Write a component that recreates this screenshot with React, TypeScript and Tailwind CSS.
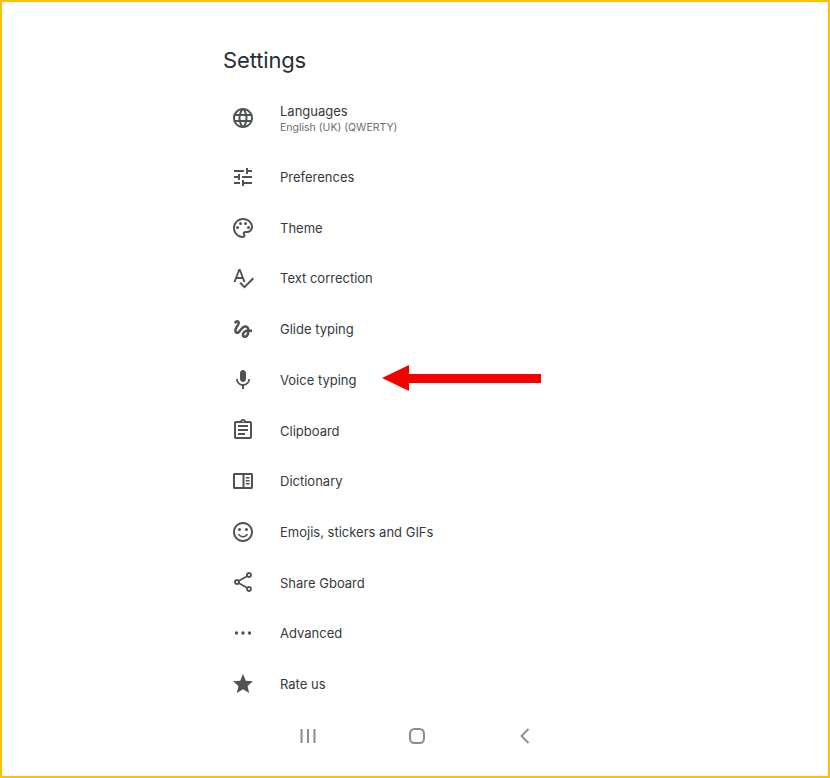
import React from 'react';

type IconProps = { className?: string };

const Svg: React.FC<{ children: React.ReactNode; className?: string }> = ({ children, className }) => (
    <svg viewBox="0 0 24 24" className={className ?? 'w-6 h-6 fill-[#505356]'}>
        {children}
    </svg>
);

const Globe = () => <Svg><path d="M11.99 2C6.47 2 2 6.48 2 12s4.47 10 9.99 10C17.52 22 22 17.52 22 12S17.52 2 11.99 2zm6.93 6h-2.95c-.32-1.25-.78-2.45-1.38-3.56 1.84.63 3.37 1.91 4.33 3.56zM12 4.04c.83 1.2 1.48 2.53 1.91 3.96h-3.82c.43-1.43 1.08-2.76 1.91-3.96zM4.26 14C4.1 13.36 4 12.69 4 12s.1-1.36.26-2h3.38c-.08.66-.14 1.32-.14 2 0 .68.06 1.34.14 2H4.26zm.82 2h2.95c.32 1.25.78 2.45 1.38 3.56-1.84-.63-3.37-1.9-4.33-3.56zm2.95-8H5.08c.96-1.66 2.49-2.93 4.33-3.56C8.81 5.55 8.35 6.75 8.03 8zM12 19.96c-.83-1.2-1.48-2.53-1.91-3.96h3.82c-.43 1.43-1.08 2.76-1.91 3.96zM14.34 14H9.66c-.09-.66-.16-1.32-.16-2 0-.68.07-1.35.16-2h4.68c.09.65.16 1.32.16 2 0 .68-.07 1.34-.16 2zm.25 5.56c.6-1.11 1.06-2.31 1.38-3.56h2.95c-.96 1.65-2.49 2.93-4.33 3.56zM16.36 14c.08-.66.14-1.32.14-2 0-.68-.06-1.34-.14-2h3.38c.16.64.26 1.31.26 2s-.1 1.36-.26 2h-3.38z" /></Svg>;
const Tune = () => <Svg><path d="M3 17v2h6v-2H3zM3 5v2h10V5H3zm10 16v-2h8v-2h-8v-2h-2v6h2zM7 9v2H3v2h4v2h2V9H7zm14 4v-2H11v2h10zm-6-4h2V7h4V5h-4V3h-2v6z" /></Svg>;
const Palette = () => (
    <Svg>
        <path d="M12 22C6.49 22 2 17.51 2 12S6.49 2 12 2s10 4.04 10 9c0 3.31-2.69 6-6 6h-1.77c-.28 0-.5.22-.5.5 0 .12.05.23.13.33.41.47.64 1.06.64 1.67 0 1.38-1.12 2.5-2.5 2.5zm0-18c-4.41 0-8 3.59-8 8s3.59 8 8 8c.28 0 .5-.22.5-.5 0-.16-.08-.28-.14-.35-.41-.46-.63-1.05-.63-1.65 0-1.38 1.12-2.5 2.5-2.5H16c2.21 0 4-1.79 4-4 0-3.86-3.59-7-8-7z" />
        <circle cx="6.5" cy="11.5" r="1.5" />
        <circle cx="9.5" cy="7.5" r="1.5" />
        <circle cx="14.5" cy="7.5" r="1.5" />
        <circle cx="17.5" cy="11.5" r="1.5" />
    </Svg>
);
const Spellcheck = () => <Svg><path d="M12.45 16h2.09L9.43 3H7.57L2.46 16h2.09l1.12-3h5.64l1.14 3zm-6.02-5L8.5 5.48 10.57 11H6.43zm15.16.59l-8.09 8.09L9.83 16l-1.41 1.41 5.09 5.09L23 13l-1.41-1.41z" /></Svg>;
const Gesture = () => <Svg><path d="M4.59 6.89c.7-.71 1.4-1.35 1.71-1.22.5.2 0 1.03-.3 1.52-.25.42-2.86 3.89-2.86 6.31 0 1.28.48 2.34 1.34 2.98.75.56 1.74.73 2.64.46 1.07-.31 1.95-1.4 3.06-2.77 1.21-1.49 2.83-3.44 4.08-3.44 1.63 0 1.65 1.01 1.76 1.79-3.78.64-5.38 3.67-5.38 5.37 0 1.7 1.44 3.09 3.21 3.09 1.63 0 4.29-1.33 4.69-6.1H21v-2.5h-2.47c-.15-1.65-1.09-4.2-4.03-4.2-2.25 0-4.18 1.91-4.94 2.84-.58.73-2.06 2.48-2.29 2.72-.25.3-.68.84-1.11.84-.45 0-.72-.83-.36-1.92.35-1.09 1.4-2.86 1.85-3.52.78-1.14 1.3-1.92 1.3-3.28C8.95 3.69 7.31 3 6.44 3 5.12 3 3.97 4 3.72 4.25c-.36.36-.66.66-.88.93l1.75 1.71zm9.29 11.66c-.31 0-.74-.26-.74-.72 0-.6.73-2.2 2.87-2.76-.3 2.69-1.43 3.48-2.13 3.48z" /></Svg>;
const Mic = () => <Svg><path d="M12 14c1.66 0 2.99-1.34 2.99-3L15 5c0-1.66-1.34-3-3-3S9 3.34 9 5v6c0 1.66 1.34 3 3 3zm5.3-3c0 3-2.54 5.1-5.3 5.1S6.7 14 6.7 11H5c0 3.41 2.72 6.23 6 6.72V21h2v-3.28c3.28-.48 6-3.3 6-6.72h-1.7z" /></Svg>;
const Clipboard = () => <Svg><path d="M7 15h7v2H7zm0-4h10v2H7zm0-4h10v2H7zm12-4h-4.18C14.4 1.84 13.3 1 12 1c-1.3 0-2.4.84-2.82 2H5c-.14 0-.27.01-.4.04-.39.08-.74.28-1.01.55-.18.18-.33.4-.43.64-.1.23-.16.49-.16.77v14c0 .27.06.54.16.78s.25.45.43.64c.27.27.62.47 1.01.55.13.02.26.03.4.03h14c1.1 0 2-.9 2-2V5c0-1.1-.9-2-2-2zm-7-.25c.41 0 .75.34.75.75s-.34.75-.75.75-.75-.34-.75-.75.34-.75.75-.75zM19 19H5V5h14v14z" /></Svg>;
const Dictionary = () => (
    <Svg>
        <path d="M3.5 4h17c.83 0 1.5.67 1.5 1.5v13c0 .83-.67 1.5-1.5 1.5h-17C2.67 20 2 19.33 2 18.5v-13C2 4.67 2.67 4 3.5 4zM4 6v12h7.5V6H4zm9.5 0v12H20V6h-6.5z" />
        <path d="M14.8 8h3.8v1.4h-3.8zm0 3h3.8v1.4h-3.8zm0 3h3.8v1.4h-3.8z" />
    </Svg>
);
const Smile = () => (
    <Svg>
        <path d="M11.99 2C6.47 2 2 6.48 2 12s4.47 10 9.99 10C17.52 22 22 17.52 22 12S17.52 2 11.99 2zM12 20c-4.42 0-8-3.58-8-8s3.58-8 8-8 8 3.58 8 8-3.58 8-8 8z" />
        <circle cx="15.5" cy="9.5" r="1.5" />
        <circle cx="8.5" cy="9.5" r="1.5" />
        <path d="M12 16c-1.48 0-2.75-.81-3.45-2H6.88c.8 2.05 2.79 3.5 5.12 3.5s4.32-1.45 5.12-3.5h-1.67c-.7 1.19-1.97 2-3.45 2z" />
    </Svg>
);
const Share = () => <Svg><path d="M18 16.08c-.76 0-1.44.3-1.96.77L8.91 12.7c.05-.23.09-.46.09-.7s-.04-.47-.09-.7l7.05-4.11c.54.5 1.25.81 2.04.81 1.66 0 3-1.34 3-3s-1.34-3-3-3-3 1.34-3 3c0 .24.04.47.09.7L8.04 9.81C7.5 9.31 6.79 9 6 9c-1.66 0-3 1.34-3 3s1.34 3 3 3c.79 0 1.5-.31 2.04-.81l7.12 4.16c-.05.21-.08.43-.08.65 0 1.61 1.31 2.92 2.92 2.92s2.92-1.31 2.92-2.92-1.31-2.92-2.92-2.92zM18 4c.55 0 1 .45 1 1s-.45 1-1 1-1-.45-1-1 .45-1 1-1zM6 13c-.55 0-1-.45-1-1s.45-1 1-1 1 .45 1 1-.45 1-1 1zm12 7.02c-.55 0-1-.45-1-1s.45-1 1-1 1 .45 1 1-.45 1-1 1z" /></Svg>;
const Dots = () => (
    <Svg>
        <circle cx="5.5" cy="12" r="1.7" />
        <circle cx="12" cy="12" r="1.7" />
        <circle cx="18.5" cy="12" r="1.7" />
    </Svg>
);
const Star = () => <Svg><path d="M12 17.27L18.18 21l-1.64-7.03L22 9.24l-7.19-.61L12 2 9.19 8.63 2 9.24l5.46 4.73L5.82 21z" /></Svg>;

const rows: { label: string; Icon: React.FC<IconProps> }[] = [
    { label: 'Preferences', Icon: Tune },
    { label: 'Theme', Icon: Palette },
    { label: 'Text correction', Icon: Spellcheck },
    { label: 'Glide typing', Icon: Gesture },
    { label: 'Voice typing', Icon: Mic },
    { label: 'Clipboard', Icon: Clipboard },
    { label: 'Dictionary', Icon: Dictionary },
    { label: 'Emojis, stickers and GIFs', Icon: Smile },
    { label: 'Share Gboard', Icon: Share },
    { label: 'Advanced', Icon: Dots },
    { label: 'Rate us', Icon: Star },
];

export default function App() {
    return (
        <div className="relative w-[830px] h-[778px] bg-white border-2 border-[#ffc000] font-['Inter',sans-serif] overflow-hidden">
            <div className="ml-[221px] w-[400px]">
                <h1 className="h-[82px] flex items-center pt-[33px] text-[22px] leading-none font-normal tracking-[-0.15px] text-[#2b2d30]">Settings</h1>

                <div className="h-[67.5px] flex items-center pl-[8px] gap-[25px]">
                    <Globe />
                    <div className="flex flex-col pt-[2px]">
                        <span className="text-[13px] leading-[17px] text-[#36393c]">Languages</span>
                        <span className="text-[10.5px] leading-[15px] text-[#6a6d71]">English (UK) (QWERTY)</span>
                    </div>
                </div>

                {rows.map(({ label, Icon }) => (
                    <div key={label} className="h-[50.7px] flex items-center pl-[8px] gap-[25px]">
                        <Icon />
                        <span className="pt-[2px] text-[13px] text-[#36393c]">{label}</span>
                    </div>
                ))}
            </div>

            {/* nav bar */}
            <div className="ml-[294px] mt-[15px] flex items-center gap-[84.5px]">
                <svg viewBox="0 0 24 24" className="w-6 h-6 stroke-[#8a8c8f] fill-none stroke-2">
                    <path d="M5.5 5v14M12 5v14M18.5 5v14" />
                </svg>
                <svg viewBox="0 0 24 24" className="w-6 h-6 stroke-[#8a8c8f] fill-none stroke-2">
                    <rect x="5" y="5" width="14" height="14" rx="4.5" />
                </svg>
                <svg viewBox="0 0 24 24" className="w-6 h-6 stroke-[#8a8c8f] fill-none stroke-[1.8]">
                    <path d="M15.5 5L8.5 12l7 7" />
                </svg>
            </div>

            {/* red arrow annotation */}
            <svg viewBox="0 0 160 28" className="absolute left-[380px] top-[362px] w-[160px] h-[28px]">
                <path d="M0 14L27 1v9h132v9H27v8z" fill="#f50000" />
            </svg>
        </div>
    );
}
